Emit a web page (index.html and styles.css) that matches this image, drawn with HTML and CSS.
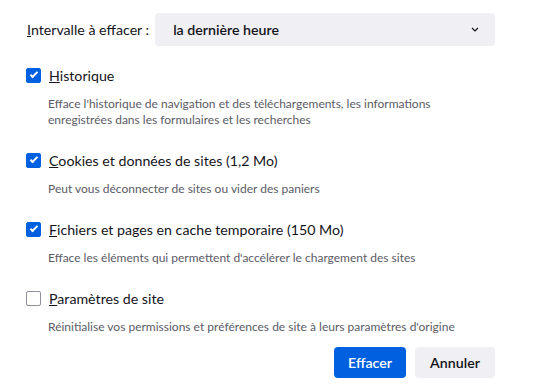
FILE: index.html
```html
<!DOCTYPE html>
<html lang="fr">
<head>
    <meta charset="UTF-8">
    <title>Effacer les données</title>
    <link rel="stylesheet" href="styles.css">
</head>
<body>
    <div class="dialog">
        <div class="range-row">
            <label class="range-label"><u>I</u>ntervalle à effacer :</label>
            <div class="select">
                <span>la dernière heure</span>
                <svg class="chevron" width="8" height="5" viewBox="0 0 8 5"><path d="M1 1l3 3 3-3" fill="none" stroke="#15141a" stroke-width="1.2"/></svg>
            </div>
        </div>

        <div class="option">
            <label class="check-row"><span class="box checked"></span><span><u>H</u>istorique</span></label>
            <p class="desc">Efface l'historique de navigation et des téléchargements, les informations enregistrées dans les formulaires et les recherches</p>
        </div>

        <div class="option">
            <label class="check-row"><span class="box checked"></span><span><u>C</u>ookies et données de sites (1,2 Mo)</span></label>
            <p class="desc">Peut vous déconnecter de sites ou vider des paniers</p>
        </div>

        <div class="option">
            <label class="check-row"><span class="box checked"></span><span><u>F</u>ichiers et pages en cache temporaire (150 Mo)</span></label>
            <p class="desc">Efface les éléments qui permettent d'accélérer le chargement des sites</p>
        </div>

        <div class="option">
            <label class="check-row"><span class="box"></span><span><u>P</u>aramètres de site</span></label>
            <p class="desc">Réinitialise vos permissions et préférences de site à leurs paramètres d'origine</p>
        </div>

        <div class="buttons">
            <button class="btn primary">Effacer</button>
            <button class="btn secondary">Annuler</button>
        </div>
    </div>
</body>
</html>
```

FILE: styles.css
```css
*,
*::before,
*::after {
    box-sizing: border-box;
}
body {
    margin: 0;
    background-color: #fff;
    color: #15141a;
    font-family: Lato, "Noto Sans", sans-serif;
}
.dialog {
    width: 536px;
    padding: 13px 41px 0 26px;
    display: flex;
    flex-direction: column;
}
.range-row {
    display: flex;
    align-items: center;
    gap: 6px;
    padding-left: 1px;
}
.range-label {
    font-size: 14.2px;
    white-space: nowrap;
}
.select {
    flex: 1;
    height: 33px;
    background-color: #f0f0f4;
    border-radius: 4px;
    display: flex;
    align-items: center;
    justify-content: space-between;
    padding: 0 16px 0 18px;
    font-size: 14.2px;
    font-weight: 600;
}
.chevron {
    display: block;
}
.option {
    margin-top: 19px;
}
.option + .option {
    margin-top: 22px;
}
.check-row {
    display: flex;
    align-items: center;
    gap: 8px;
    height: 20px;
    font-size: 14.2px;
}
.box {
    width: 15px;
    height: 15px;
    border: 1px solid #8f8f9d;
    border-radius: 2px;
    background-color: #fff;
    display: flex;
    align-items: center;
    justify-content: center;
}
.box.checked {
    background-color: #0061e0;
    border-color: #0061e0;
}
.box.checked::after {
    content: "";
    width: 8px;
    height: 4px;
    border-left: 2px solid #fff;
    border-bottom: 2px solid #fff;
    transform: translateY(-1px) rotate(-45deg);
}
.desc {
    margin: 11px 0 0 22px;
    font-size: 12px;
    line-height: 16px;
    color: #5b5b66;
}
.buttons {
    display: flex;
    justify-content: flex-end;
    gap: 9px;
    margin-top: 12px;
}
.btn {
    height: 31px;
    border: none;
    border-radius: 4px;
    font-family: inherit;
    font-size: 14.2px;
    font-weight: 600;
}
.primary {
    width: 72px;
    background-color: #0061e0;
    color: #fff;
}
.secondary {
    width: 80px;
    background-color: #f0f0f4;
    color: #15141a;
}
```
